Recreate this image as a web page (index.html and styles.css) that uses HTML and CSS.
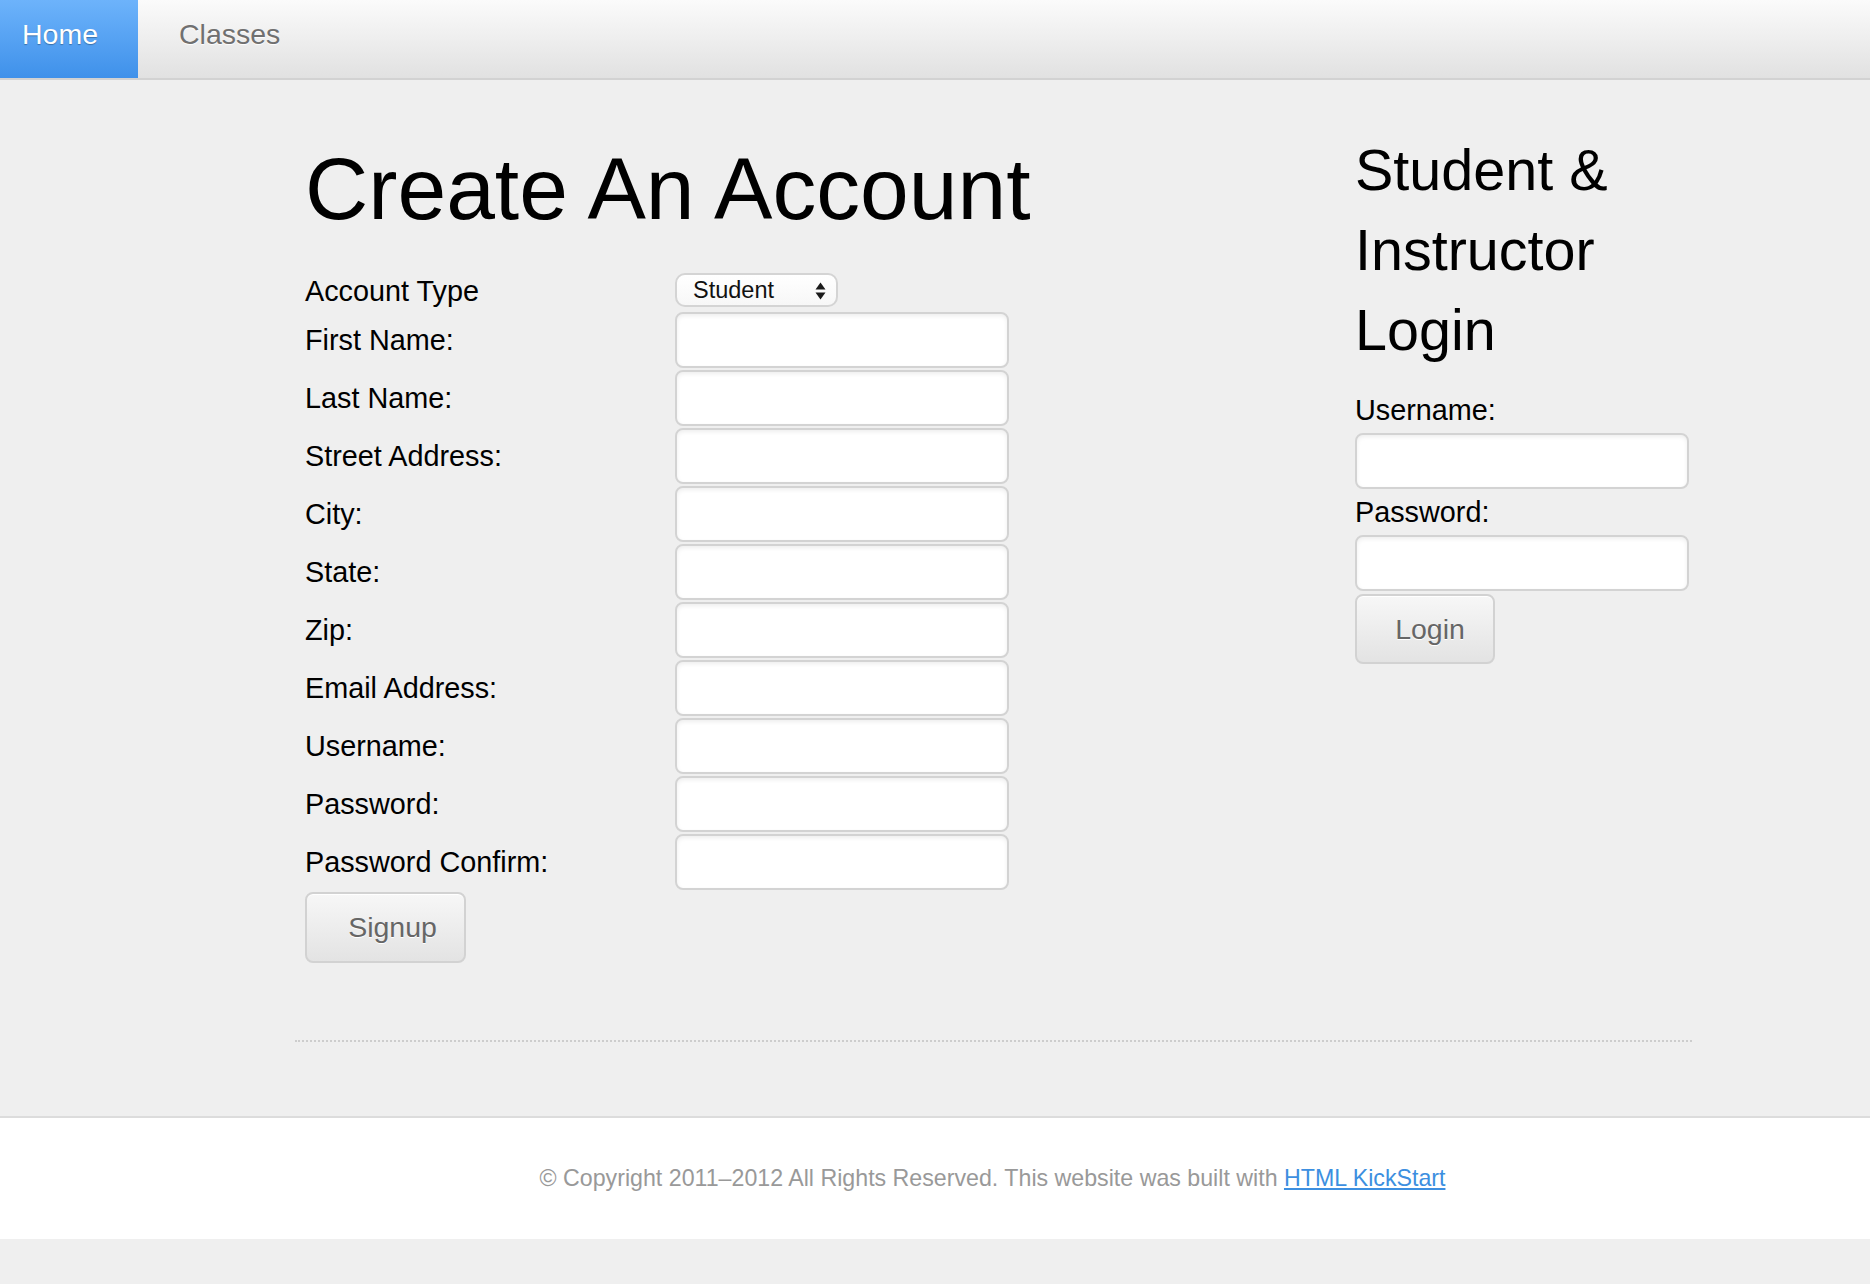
FILE: index.html
```html
<!DOCTYPE html>
<html lang="en">
<head>
<meta charset="utf-8">
<title>Create An Account</title>
<link rel="stylesheet" href="styles.css">
</head>
<body>
<header class="nav">
  <a class="nav-item active" href="#">Home</a>
  <a class="nav-item" href="#">Classes</a>
</header>

<main class="page">
  <div class="columns">
    <section class="signup">
      <h1 class="title">Create An Account</h1>
      <form class="form">
        <label class="lbl">Account Type</label>
        <div class="select-wrap">
          <select class="select"><option>Student</option><option>Instructor</option></select>
          <svg class="select-arrows" width="11" height="18" viewBox="0 0 11 18"><path d="M5.5 0.5 L10.5 7.5 H0.5 Z" fill="#1a1a1a"/><path d="M5.5 17.5 L10.5 10.5 H0.5 Z" fill="#1a1a1a"/></svg>
        </div>
        <label class="lbl">First Name:</label><input class="field" type="text">
        <label class="lbl">Last Name:</label><input class="field" type="text">
        <label class="lbl">Street Address:</label><input class="field" type="text">
        <label class="lbl">City:</label><input class="field" type="text">
        <label class="lbl">State:</label><input class="field" type="text">
        <label class="lbl">Zip:</label><input class="field" type="text">
        <label class="lbl">Email Address:</label><input class="field" type="text">
        <label class="lbl">Username:</label><input class="field" type="text">
        <label class="lbl">Password:</label><input class="field" type="password">
        <label class="lbl">Password Confirm:</label><input class="field" type="password">
      </form>
      <button class="btn btn-signup" type="button">Signup</button>
    </section>

    <aside class="login">
      <h3 class="login-title">Student &amp; Instructor Login</h3>
      <label class="lbl login-lbl">Username:</label>
      <input class="field login-field" type="text">
      <label class="lbl login-lbl">Password:</label>
      <input class="field login-field" type="password">
      <button class="btn btn-login" type="button">Login</button>
    </aside>
  </div>
  <hr class="divider">
</main>

<footer class="footer">
  <p class="copy">&copy; Copyright 2011&ndash;2012 All Rights Reserved. This website was built with <a href="#">HTML KickStart</a></p>
</footer>
</body>
</html>
```

FILE: styles.css
```css
* { box-sizing: border-box; }

html, body {
  margin: 0;
  padding: 0;
  background: #efefef;
  font-family: "Liberation Sans", Arial, sans-serif;
  color: #000;
}

/* ---------- nav ---------- */
.nav {
  display: flex;
  height: 80px;
  background: linear-gradient(#fbfbfb, #e1e1e1);
  border-bottom: 2px solid #d2d2d2;
}

.nav-item {
  display: block;
  height: 78px;
  line-height: 68px;
  font-size: 28.5px;
  text-decoration: none;
  color: #707070;
  text-shadow: 0 1px 1px #fff;
  padding: 0 40px 0 41px;
}

.nav-item.active {
  padding: 0 30px 0 22px;
  width: 138px;
  color: #fff;
  text-shadow: 0 1px 1px rgba(0, 0, 0, 0.3);
  background: linear-gradient(#6db3fb, #3f91ea);
}

/* ---------- page ---------- */
.page {
  margin-left: 295px;
  width: 1397px;
  padding-top: 50px;
}

.columns {
  display: flex;
  align-items: flex-start;
}

.signup {
  width: 1060px;
  padding-left: 10px;
  padding-top: 17px;
}

.title {
  margin: 0 0 42px 0;
  font-size: 87.6px;
  line-height: 84px;
  font-weight: normal;
}

.form {
  display: grid;
  grid-template-columns: 370px 334px;
  align-items: center;
}

.lbl {
  font-size: 28.8px;
  line-height: 34px;
  display: block;
}

.form .lbl {
  margin-top: -3px;
}

.select-wrap {
  position: relative;
  width: 163px;
  height: 34px;
  margin-bottom: 5px;
}

.select {
  appearance: none;
  -webkit-appearance: none;
  width: 163px;
  height: 34px;
  padding: 0 0 0 16px;
  border: 2px solid #d4d4d4;
  border-radius: 10px;
  background: linear-gradient(#ffffff, #f7f7f7);
  font-family: "Liberation Sans", Arial, sans-serif;
  font-size: 23.5px;
  color: #111;
}

.select-arrows {
  position: absolute;
  left: 140px;
  top: 9px;
  pointer-events: none;
}

.field {
  width: 334px;
  height: 56px;
  margin: 0 0 2px 0;
  border: 2px solid #d3d3d3;
  border-radius: 8px;
  background: #fff;
  box-shadow: inset 0 2px 4px rgba(0, 0, 0, 0.07);
  font-size: 22px;
  padding: 0 12px;
}

.btn {
  display: block;
  height: 71px;
  border: 2px solid #d2d2d2;
  border-radius: 8px;
  background: linear-gradient(#f7f7f7, #e3e3e3);
  box-shadow: inset 0 1px 0 #fff;
  color: #666;
  text-shadow: 0 1px 0 #fff;
  font-family: "Liberation Sans", Arial, sans-serif;
  font-size: 28.5px;
  cursor: pointer;
}

.btn-signup {
  width: 161px;
  padding: 0 0 0 14px;
}

/* ---------- login ---------- */
.login {
  width: 337px;
}

.login-title {
  margin: 0 0 23px 0;
  font-size: 57.5px;
  line-height: 80px;
  font-weight: normal;
}

.login-lbl {
  margin-bottom: 6px;
}

.login-field {
  margin-bottom: 6px;
}

.btn-login {
  width: 140px;
  height: 70px;
  margin-top: -3px;
  padding: 0 0 0 10px;
}

/* ---------- divider ---------- */
.divider {
  margin: 77px 0 0 0;
  border: 0;
  border-top: 2px dotted #cdcdcd;
  height: 0;
}

/* ---------- footer ---------- */
.footer {
  margin-top: 74px;
  background: #fff;
  border-top: 2px solid #dcdcdc;
  height: 123px;
  display: flex;
  align-items: center;
  justify-content: center;
  padding-left: 115px;
}

.copy {
  margin: 0;
  font-size: 23.2px;
  color: #999;
}

.copy a {
  color: #3d8fe0;
  text-decoration: underline;
}
```
